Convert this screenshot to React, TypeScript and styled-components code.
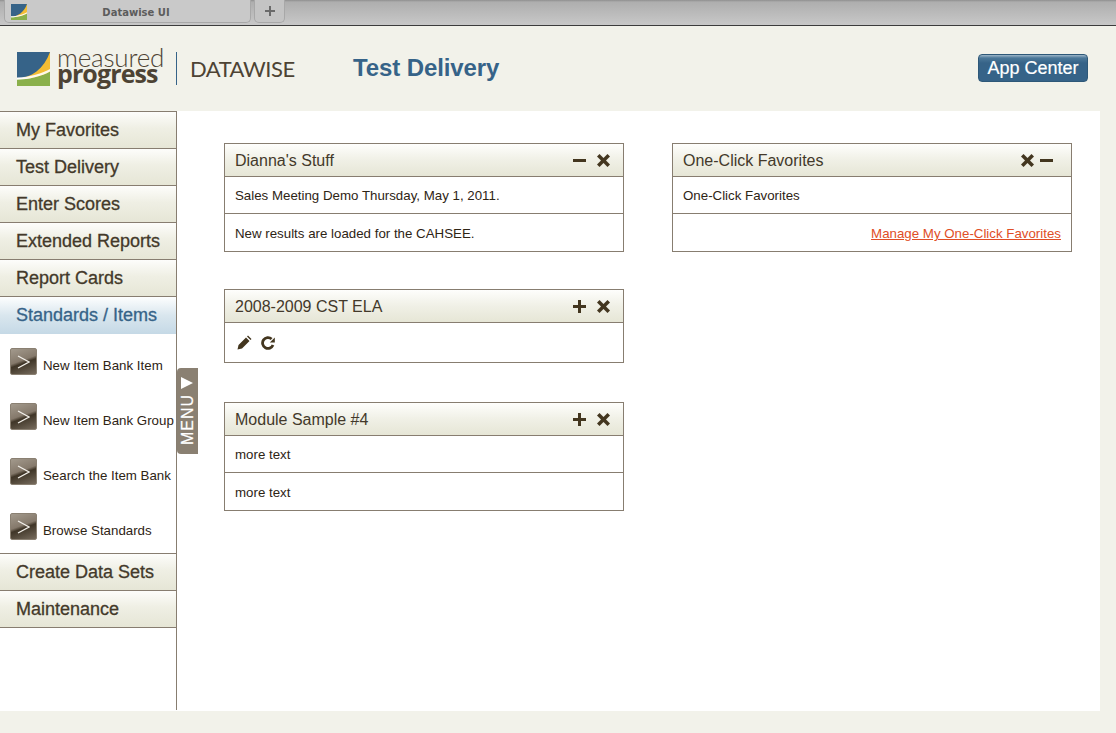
import React from 'react';
import styled, { createGlobalStyle } from 'styled-components';

const GlobalStyle = createGlobalStyle`
    html, body {
        margin: 0;
        padding: 0;
        background: #f2f2ea;
        font-family: 'Liberation Sans', Arial, sans-serif;
    }
`;

const Page = styled.div`
    width: 1116px;
    height: 733px;
    overflow: hidden;
    background: #f2f2ea;
`;

const TabBar = styled.div`
    height: 25px;
    box-sizing: content-box;
    border-bottom: 1px solid #3c3c3c;
    background: linear-gradient(#8f8f8f 0, #aeaeae 2px, #c8c8c8 100%);
    display: flex;
    align-items: flex-start;
    padding-left: 4px;
    gap: 3px;
`;

const BrowserTab = styled.div`
    width: 247px;
    height: 23px;
    box-sizing: border-box;
    background: #c9c9c9;
    border: 1px solid #a8a8a8;
    border-top: none;
    border-radius: 0 0 5px 5px;
    display: flex;
    align-items: center;
    padding: 2px 0 0 6px;
`;

const TabTitle = styled.span`
    flex: 1;
    text-align: center;
    font-family: 'DejaVu Sans', sans-serif;
    font-size: 10px;
    font-weight: bold;
    color: #5c5c5c;
    padding-right: 5px;
`;

const NewTab = styled.div`
    width: 31px;
    height: 23px;
    box-sizing: border-box;
    background: #c4c4c4;
    border: 1px solid #a8a8a8;
    border-top: none;
    border-radius: 0 0 5px 5px;
    display: flex;
    align-items: center;
    justify-content: center;
`;

const Header = styled.header`
    height: 85px;
    display: flex;
    align-items: center;
    padding: 0 28px 0 17px;
`;

const LogoWords = styled.div`
    margin-left: 7px;
    margin-top: -9px;
    width: 112px;
    display: flex;
    flex-direction: column;
    color: #4d4334;
`;

const LogoTop = styled.span`
    font-family: Lato, sans-serif;
    font-weight: 300;
    font-size: 26px;
    line-height: 21px;
    letter-spacing: -0.2px;
`;

const LogoBottom = styled.span`
    font-family: 'Open Sans', sans-serif;
    font-weight: 700;
    font-size: 25px;
    line-height: 16px;
    letter-spacing: -0.9px;
    margin-top: -3px;
`;

const LogoDivider = styled.div`
    width: 1px;
    height: 33px;
    background: #366388;
    margin: 0 13px 0 7px;
`;

const ProductName = styled.span`
    font-family: Lato, sans-serif;
    font-size: 22px;
    color: #4d4334;
    width: 163px;
    letter-spacing: -0.5px;
`;

const PageTitle = styled.h1`
    margin: -2px 0 0;
    flex: 1;
    font-size: 24px;
    font-weight: bold;
    color: #366388;
    letter-spacing: -0.1px;
`;

const AppCenter = styled.button`
    width: 110px;
    height: 28px;
    padding: 0;
    border: 1px solid #2e5878;
    border-radius: 4px;
    background: linear-gradient(#9db6c9 0, #4c7899 3px, #366388 8px, #366388 100%);
    color: #fff;
    font-family: inherit;
    font-size: 18px;
    -webkit-text-stroke: 0.2px #fff;
    margin-top: -1px;
`;

const Shell = styled.div`
    width: 1100px;
    height: 600px;
    background: #fff;
    display: flex;
    position: relative;
`;

const Sidebar = styled.nav`
    width: 177px;
    height: 599px;
    box-sizing: border-box;
    border-right: 1px solid #877d70;
    border-top: 1px solid #877d70;
    flex: none;
`;

const MenuItem = styled.div<{ $active?: boolean }>`
    height: 37px;
    box-sizing: border-box;
    padding: ${({ $active }) => ($active ? '0' : '1px')} 0 0 16px;
    display: flex;
    align-items: center;
    font-size: 18px;
    -webkit-text-stroke: 0.3px currentColor;
    color: ${({ $active }) => ($active ? '#366388' : '#43392a')};
    background: ${({ $active }) =>
        $active
            ? 'linear-gradient(#fdfefe 0, #d9e6ee 50%, #c5d9e6 100%)'
            : 'linear-gradient(#fdfdfb 0, #efefe4 45%, #e6e6d6 100%)'};
    border-bottom: ${({ $active }) => ($active ? 'none' : '1px solid #877d70')};
`;

const SubMenu = styled.div`
    height: 221px;
    box-sizing: border-box;
    padding: 15px 0 0 10px;
    border-bottom: 1px solid #877d70;
    display: flex;
    flex-direction: column;
    gap: 28px;
    margin-top: -1px;
`;

const SubItem = styled.div`
    height: 27px;
    display: flex;
    align-items: center;
    gap: 6px;
    font-size: 13.3px;
    color: #2e2415;
    white-space: nowrap;
`;

const SubLabel = styled.span`
    padding-top: 8px;
`;

const ArrowIcon = styled.div`
    width: 27px;
    height: 27px;
    box-sizing: border-box;
    border: 1px solid #8a8072;
    border-radius: 2px;
    background: linear-gradient(160deg, #a39a8d 0, #85796b 45%, #3f3527 55%, #766b5d 100%);
    display: flex;
    align-items: center;
    justify-content: center;
    flex: none;
`;

const MenuToggle = styled.div`
    position: absolute;
    left: 177px;
    top: 257px;
    width: 21px;
    height: 86px;
    background: #8a8072;
    border-radius: 0 4px 4px 0;
    display: flex;
    align-items: center;
    justify-content: center;
    gap: 5px;
    color: #fff;
    font-size: 16px;
    -webkit-text-stroke: 0.2px #fff;
    writing-mode: vertical-rl;
    transform: rotate(180deg);
`;

const ToggleLabel = styled.span`
    letter-spacing: 1px;
`;

const Columns = styled.main`
    flex: 1;
    display: flex;
    align-items: flex-start;
    gap: 48px;
    padding: 32px 0 0 47px;
`;

const Column = styled.div`
    width: 400px;
    display: flex;
    flex-direction: column;
    gap: 38px;
`;

const Card = styled.section<{ $raised?: boolean }>`
    border: 1px solid #877d70;
    box-sizing: border-box;
    width: 400px;
    margin: ${({ $raised }) => ($raised ? '-1px 0 1px' : '0')};
`;

const CardHeader = styled.div`
    height: 33px;
    box-sizing: border-box;
    border-bottom: 1px solid #877d70;
    background: linear-gradient(#fefefc 0, #f0f0e6 50%, #e6e6d6 100%);
    display: flex;
    align-items: center;
    padding: 0 13px 0 10px;
    color: #43392a;
`;

const CardTitle = styled.span`
    flex: 1;
    font-size: 16px;
    padding-top: 1px;
`;

const CardActions = styled.div<{ $tight?: boolean }>`
    display: flex;
    align-items: center;
    gap: ${({ $tight }) => ($tight ? '6px' : '11px')};
    padding-right: ${({ $tight }) => ($tight ? '5px' : '0')};
`;

const CardRow = styled.div<{ $end?: boolean }>`
    height: 38px;
    box-sizing: border-box;
    padding: 2px 10px 0;
    display: flex;
    align-items: center;
    justify-content: ${({ $end }) => ($end ? 'flex-end' : 'flex-start')};
    font-size: 13.3px;
    color: #2e2415;
    border-top: 1px solid #877d70;
    ${CardHeader} + & {
        height: 36px;
        padding-top: 0;
        border-top: none;
    }
`;

const ToolRow = styled.div`
    height: 39px;
    box-sizing: border-box;
    padding: 0 0 0 12px;
    display: flex;
    align-items: center;
    gap: 9px;
`;

const ManageLink = styled.a`
    color: #e04e26;
    text-decoration: underline;
    font-size: 13.3px;
`;

const LogoMark = ({ size }: { size: number }) => (
    <svg width={size} height={size * 34 / 33} viewBox="0 0 33 34">
        <rect width="33" height="34" fill="#fff" />
        <rect width="33" height="26" fill="#366388" />
        <path d="M0 26.5C14 26 27 17 33 0V26.5Z" fill="#f4bd33" />
        <path d="M0 27.5C12 27.5 25 24 33 19.5V34H0Z" fill="#8ab04b" />
        <path d="M0 25.5C12 25.5 26 21 33 17V19.5C25 24 12 27.5 0 27.5Z" fill="#fff" opacity="0.9" />
    </svg>
);

const MinusIcon = () => (
    <svg width="13" height="13" viewBox="0 0 13 13">
        <rect x="0" y="5" width="13" height="3" fill="#43361f" />
    </svg>
);

const PlusIcon = () => (
    <svg width="13" height="13" viewBox="0 0 13 13">
        <path d="M5 0h3v5h5v3H8v5H5V8H0V5h5z" fill="#43361f" />
    </svg>
);

const CloseIcon = () => (
    <svg width="13" height="13" viewBox="0 0 13 13">
        <path d="M0 2.5L2.5 0l4 4 4-4L13 2.5l-4 4 4 4-2.5 2.5-4-4-4 4L0 10.5l4-4z" fill="#43361f" />
    </svg>
);

const PencilIcon = () => (
    <svg width="15" height="15" viewBox="0 0 15 15">
        <path d="M0.5 14.5l1-4.5L9 2.5l3.5 3.5L5 13.5zM10 1.5l1-1 3.5 3.5-1 1z" fill="#43361f" />
    </svg>
);

const RefreshIcon = () => (
    <svg width="14" height="14" viewBox="0 0 14 14">
        <path d="M12 9A5.4 5.4 0 1 1 10.6 3" fill="none" stroke="#43361f" strokeWidth="2.8" />
        <path d="M13.8 1.5v5H8.8z" fill="#43361f" />
    </svg>
);

const Chevron = () => (
    <svg width="13" height="14" viewBox="0 0 13 14">
        <path d="M1 1l11 6L1 13" fill="none" stroke="#f3f0ea" strokeWidth="1.2" />
    </svg>
);

const MENU_TOP = ['My Favorites', 'Test Delivery', 'Enter Scores', 'Extended Reports', 'Report Cards'];
const MENU_SUB = ['New Item Bank Item', 'New Item Bank Group', 'Search the Item Bank', 'Browse Standards'];
const MENU_BOTTOM = ['Create Data Sets', 'Maintenance'];

export default function App() {
    return (
        <Page>
            <GlobalStyle />
            <TabBar>
                <BrowserTab>
                    <LogoMark size={16} />
                    <TabTitle>Datawise UI</TabTitle>
                </BrowserTab>
                <NewTab>
                    <svg width="12" height="12" viewBox="0 0 12 12">
                        <path d="M5 1h2v4h4v2H7v4H5V7H1V5h4z" fill="#6a6a6a" />
                    </svg>
                </NewTab>
            </TabBar>
            <Header>
                <LogoMark size={33} />
                <LogoWords>
                    <LogoTop>measured</LogoTop>
                    <LogoBottom>progress</LogoBottom>
                </LogoWords>
                <LogoDivider />
                <ProductName>DATAWISE</ProductName>
                <PageTitle>Test Delivery</PageTitle>
                <AppCenter>App Center</AppCenter>
            </Header>
            <Shell>
                <Sidebar>
                    {MENU_TOP.map(label => (
                        <MenuItem key={label}>{label}</MenuItem>
                    ))}
                    <MenuItem $active>Standards / Items</MenuItem>
                    <SubMenu>
                        {MENU_SUB.map(label => (
                            <SubItem key={label}>
                                <ArrowIcon>
                                    <Chevron />
                                </ArrowIcon>
                                <SubLabel>{label}</SubLabel>
                            </SubItem>
                        ))}
                    </SubMenu>
                    {MENU_BOTTOM.map(label => (
                        <MenuItem key={label}>{label}</MenuItem>
                    ))}
                </Sidebar>
                <MenuToggle>
                    <ToggleLabel>MENU</ToggleLabel>
                    <svg width="12" height="12" viewBox="0 0 12 12">
                        <path d="M12 0L0 6l12 6z" fill="#fff" />
                    </svg>
                </MenuToggle>
                <Columns>
                    <Column>
                        <Card>
                            <CardHeader>
                                <CardTitle>Dianna's Stuff</CardTitle>
                                <CardActions>
                                    <MinusIcon />
                                    <CloseIcon />
                                </CardActions>
                            </CardHeader>
                            <CardRow>Sales Meeting Demo Thursday, May 1, 2011.</CardRow>
                            <CardRow>New results are loaded for the CAHSEE.</CardRow>
                        </Card>
                        <Card $raised>
                            <CardHeader>
                                <CardTitle>2008-2009 CST ELA</CardTitle>
                                <CardActions>
                                    <PlusIcon />
                                    <CloseIcon />
                                </CardActions>
                            </CardHeader>
                            <ToolRow>
                                <PencilIcon />
                                <RefreshIcon />
                            </ToolRow>
                        </Card>
                        <Card>
                            <CardHeader>
                                <CardTitle>Module Sample #4</CardTitle>
                                <CardActions>
                                    <PlusIcon />
                                    <CloseIcon />
                                </CardActions>
                            </CardHeader>
                            <CardRow>more text</CardRow>
                            <CardRow>more text</CardRow>
                        </Card>
                    </Column>
                    <Column>
                        <Card>
                            <CardHeader>
                                <CardTitle>One-Click Favorites</CardTitle>
                                <CardActions $tight>
                                    <CloseIcon />
                                    <MinusIcon />
                                </CardActions>
                            </CardHeader>
                            <CardRow>One-Click Favorites</CardRow>
                            <CardRow $end>
                                <ManageLink href="#">Manage My One-Click Favorites</ManageLink>
                            </CardRow>
                        </Card>
                    </Column>
                </Columns>
            </Shell>
        </Page>
    );
}
